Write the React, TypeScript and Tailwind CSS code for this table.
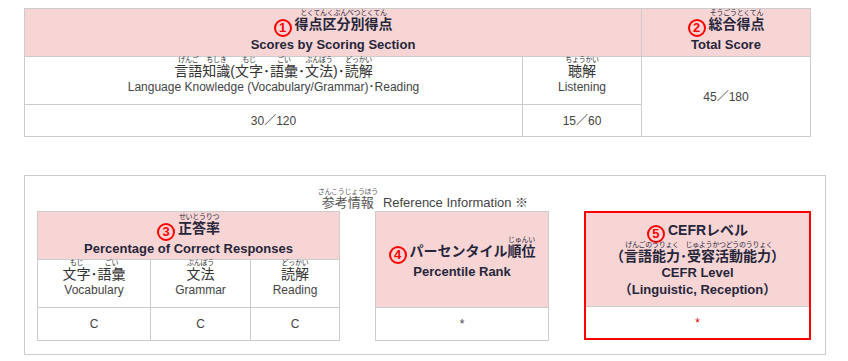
import React from 'react';

const font = "font-['Liberation_Sans','Noto_Sans_CJK_JP',sans-serif]";

// furigana placed over its base word without widening it
const R: React.FC<{ t: string; children: React.ReactNode }> = ({ t, children }) => (
  <span className="relative inline-block">
    {children}
    <span className="absolute left-1/2 -translate-x-1/2 top-[-7px] whitespace-nowrap text-[7px] leading-[7px] font-normal tracking-[-0.3px]">
      {t}
    </span>
  </span>
);

const Num: React.FC<{ n: number }> = ({ n }) => (
  <span className="inline-flex w-[18px] h-[18px] mr-[3px] rounded-full border-2 border-[#ff0000] text-[#ff0000] text-[13px] font-bold leading-none items-center justify-center align-[-3px] font-['Liberation_Sans',sans-serif]">
    {n}
  </span>
);

const cell = 'border border-[#cccccc] text-center';
const head = 'bg-[#f7d5d5] text-[#26263a] font-bold';

export default function App() {
  return (
    <div className={`${font} bg-white w-[848px] h-[361px] text-[#444]`}>
      {/* Top score table */}
      <table className="ml-[24px] mt-[8px] w-[786px] table-fixed border-collapse">
        <colgroup>
          <col className="w-[498px]" />
          <col className="w-[119px]" />
          <col className="w-[169px]" />
        </colgroup>
        <tbody>
          <tr className="h-[48px]">
            <th colSpan={2} className={`${cell} ${head} align-top`}>
              <div className="text-[14px] leading-[16px] pt-[7px]">
                <Num n={1} />
                <R t="とくてんくぶんべつとくてん">得点区分別得点</R>
              </div>
              <div className="text-[13px] leading-[15px]">Scores by Scoring Section</div>
            </th>
            <th className={`${cell} ${head} align-top`}>
              <div className="text-[14px] leading-[16px] pt-[7px]">
                <Num n={2} />
                <R t="そうごうとくてん">総合得点</R>
              </div>
              <div className="text-[13px] leading-[15px]">Total Score</div>
            </th>
          </tr>
          <tr className="h-[48px]">
            <td className={`${cell} align-top`}>
              <div className="text-[14px] leading-[16px] pt-[6px] text-[#333]">
                <R t="げんご">言語</R>
                <R t="ちしき">知識</R>(<R t="もじ">文字</R>･<R t="ごい">語彙</R>･
                <R t="ぶんぽう">文法</R>)･<R t="どっかい">読解</R>
              </div>
              <div className="text-[12px] leading-[16px]">Language Knowledge (Vocabulary/Grammar)･Reading</div>
            </td>
            <td className={`${cell} align-top`}>
              <div className="text-[14px] leading-[16px] pt-[6px] text-[#333]">
                <R t="ちょうかい">聴解</R>
              </div>
              <div className="text-[12px] leading-[16px]">Listening</div>
            </td>
            <td rowSpan={2} className={`${cell} align-middle text-[12px]`}>
              45／180
            </td>
          </tr>
          <tr className="h-[32px]">
            <td className={`${cell} align-middle text-[12px]`}>30／120</td>
            <td className={`${cell} align-middle text-[12px]`}>15／60</td>
          </tr>
        </tbody>
      </table>

      {/* Reference info box */}
      <div className="ml-[24px] mt-[38px] w-[802px] h-[180px] border border-[#cccccc] flex flex-col">
        <div className="text-center pt-[18px] h-[35px] leading-[16px]">
          <span className="text-[13px] text-[#555]">
            <R t="さんこうじょうほう">参考情報</R>
          </span>
          <span className="text-[13px] ml-[9px]">Reference Information ※</span>
        </div>
        <div className="flex pl-[12px] pr-[14px] justify-between">
          {/* 3 */}
          <table className="w-[302px] h-[129px] table-fixed border-collapse">
            <colgroup>
              <col className="w-[113px]" />
              <col className="w-[100px]" />
              <col className="w-[89px]" />
            </colgroup>
            <tbody>
              <tr className="h-[48px]">
                <th colSpan={3} className={`${cell} ${head} align-top`}>
                  <div className="text-[14px] leading-[16px] pt-[8px]">
                    <Num n={3} />
                    <R t="せいとうりつ">正答率</R>
                  </div>
                  <div className="text-[13px] leading-[15px]">Percentage of Correct Responses</div>
                </th>
              </tr>
              <tr className="h-[48px]">
                <td className={`${cell} align-top`}>
                  <div className="text-[14px] leading-[16px] pt-[6px] text-[#333]">
                    <R t="もじ">文字</R>･<R t="ごい">語彙</R>
                  </div>
                  <div className="text-[12px] leading-[16px]">Vocabulary</div>
                </td>
                <td className={`${cell} align-top`}>
                  <div className="text-[14px] leading-[16px] pt-[6px] text-[#333]">
                    <R t="ぶんぽう">文法</R>
                  </div>
                  <div className="text-[12px] leading-[16px]">Grammar</div>
                </td>
                <td className={`${cell} align-top`}>
                  <div className="text-[14px] leading-[16px] pt-[6px] text-[#333]">
                    <R t="どっかい">読解</R>
                  </div>
                  <div className="text-[12px] leading-[16px]">Reading</div>
                </td>
              </tr>
              <tr className="h-[33px]">
                <td className={`${cell} align-middle text-[12px]`}>C</td>
                <td className={`${cell} align-middle text-[12px]`}>C</td>
                <td className={`${cell} align-middle text-[12px]`}>C</td>
              </tr>
            </tbody>
          </table>

          {/* 4 */}
          <table className="w-[174px] h-[129px] table-fixed border-collapse">
            <tbody>
              <tr className="h-[96px]">
                <th className={`${cell} ${head} align-top`}>
                  <div className="text-[14px] leading-[16px] pt-[31px]">
                    <Num n={4} />
                    パーセンタイル<R t="じゅんい">順位</R>
                  </div>
                  <div className="text-[13px] leading-[16px]">Percentile Rank</div>
                </th>
              </tr>
              <tr className="h-[33px]">
                <td className={`${cell} align-middle text-[12px]`}>*</td>
              </tr>
            </tbody>
          </table>

          {/* 5 */}
          <div className="w-[227px] h-[129px] border-2 border-[#ff0000] flex flex-col">
            <div className={`h-[94px] ${head} border-b border-[#cccccc] flex flex-col items-center pt-[9px] text-center`}>
              <div className="text-[14px] leading-[17px]">
                <Num n={5} />
                CEFRレベル
              </div>
              <div className="text-[14px] leading-[16px] mt-[5px]">
                （<R t="げんごのうりょく">言語能力</R>･<R t="じゅようかつどうのうりょく">受容活動能力</R>）
              </div>
              <div className="text-[13px] leading-[17px]">CEFR Level</div>
              <div className="text-[13px] leading-[17px]">（Linguistic, Reception）</div>
            </div>
            <div className="flex-1 flex items-center justify-center text-[12px] text-[#ff0000]">*</div>
          </div>
        </div>
      </div>
    </div>
  );
}
